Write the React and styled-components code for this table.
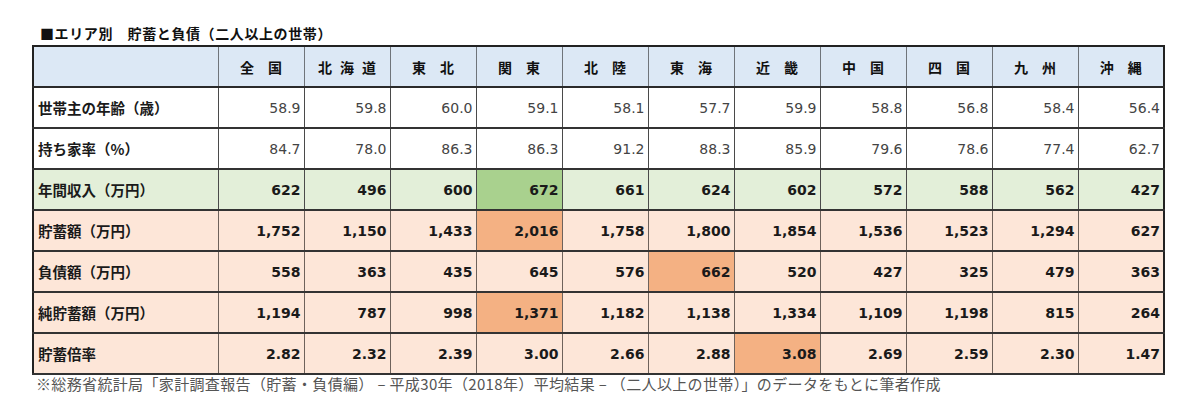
import React from "react";
import styled, { createGlobalStyle } from "styled-components";

const Global = createGlobalStyle`
  html, body { margin: 0; padding: 0; background: #fff; }
  body { font-family: "DejaVu Sans", "Noto Sans CJK JP", sans-serif; }
`;

const Page = styled.div`
  width: 1200px;
  height: 420px;
  padding: 23px 0 0 32px;
  box-sizing: border-box;
  overflow: hidden;
`;

const Title = styled.div`
  font-family: "Noto Sans CJK JP", sans-serif;
  font-weight: 700;
  font-size: 14px;
  line-height: 20px;
  height: 20px;
  padding-left: 8px;
  margin-bottom: 2px;
  color: #111;
  letter-spacing: 0.6px;
`;

const Table = styled.table`
  border-collapse: collapse;
  table-layout: fixed;
  width: 1131px;
  border: 2px solid #222;
`;

const HeadCell = styled.th`
  background: #dce8f5;
  height: 39px;
  padding: 0 0 0 ${(p) => p.$spacing || 0}px;
  font-family: "Noto Sans CJK JP", sans-serif;
  font-weight: 700;
  font-size: 14px;
  color: #111;
  text-align: center;
  white-space: pre;
  border-left: ${(p) => (p.$first ? "none" : "1.5px solid #6f747a")};
  border-bottom: 2px solid #2a2a2a;
  letter-spacing: ${(p) => p.$spacing || 0}px;
`;

const rowBg = {
  white: "#ffffff",
  green: "#e3efd9",
  pink: "#fde6d8",
};
const hiBg = {
  green: "#a9d18e",
  pink: "#f4b183",
};

const Row = styled.tr`
  background: ${(p) => rowBg[p.$tone]};
`;

const Label = styled.td`
  height: 39px;
  padding: 0 0 0 4px;
  font-family: "Noto Sans CJK JP", sans-serif;
  font-weight: 700;
  font-size: 14.5px;
  color: #1a1a1a;
  border-bottom: 2px solid #333;
  white-space: nowrap;
`;

const Cell = styled.td`
  height: 39px;
  padding: 0 3px 0 0;
  text-align: right;
  font-family: "DejaVu Sans", "Noto Sans CJK JP", sans-serif;
  font-size: 14px;
  font-weight: ${(p) => (p.$bold ? 700 : 400)};
  color: ${(p) => (p.$bold ? "#1a1a1a" : "#444")};
  background: ${(p) => (p.$hi ? hiBg[p.$tone] : "transparent")};
  border-left: 1.5px solid ${(p) => (p.$tone === "pink" ? "#6e625b" : "#4a4a4a")};
  border-bottom: 2px solid #333;
`;

const Footer = styled.div`
  font-family: "Noto Sans CJK JP", sans-serif;
  font-size: 15px;
  line-height: 20px;
  color: #555;
  padding-left: 4px;
  margin-top: -1px;
  letter-spacing: 0.35px;
  white-space: pre;
`;

const heads = [
  { t: "全　国" },
  { t: "北海道", s: 8 },
  { t: "東　北" },
  { t: "関　東" },
  { t: "北　陸" },
  { t: "東　海" },
  { t: "近　畿" },
  { t: "中　国" },
  { t: "四　国" },
  { t: "九　州" },
  { t: "沖　縄" },
];

const rows = [
  {
    label: "世帯主の年齢（歳）",
    tone: "white",
    values: ["58.9", "59.8", "60.0", "59.1", "58.1", "57.7", "59.9", "58.8", "56.8", "58.4", "56.4"],
  },
  {
    label: "持ち家率（%）",
    tone: "white",
    values: ["84.7", "78.0", "86.3", "86.3", "91.2", "88.3", "85.9", "79.6", "78.6", "77.4", "62.7"],
  },
  {
    label: "年間収入（万円）",
    tone: "green",
    hi: 3,
    values: ["622", "496", "600", "672", "661", "624", "602", "572", "588", "562", "427"],
  },
  {
    label: "貯蓄額（万円）",
    tone: "pink",
    hi: 3,
    values: ["1,752", "1,150", "1,433", "2,016", "1,758", "1,800", "1,854", "1,536", "1,523", "1,294", "627"],
  },
  {
    label: "負債額（万円）",
    tone: "pink",
    hi: 5,
    values: ["558", "363", "435", "645", "576", "662", "520", "427", "325", "479", "363"],
  },
  {
    label: "純貯蓄額（万円）",
    tone: "pink",
    hi: 3,
    values: ["1,194", "787", "998", "1,371", "1,182", "1,138", "1,334", "1,109", "1,198", "815", "264"],
  },
  {
    label: "貯蓄倍率",
    tone: "pink",
    hi: 6,
    values: ["2.82", "2.32", "2.39", "3.00", "2.66", "2.88", "3.08", "2.69", "2.59", "2.30", "1.47"],
  },
];

export default function App() {
  return (
    <Page>
      <Global />
      <Title>■エリア別　貯蓄と負債（二人以上の世帯）</Title>
      <Table>
        <colgroup>
          <col style={{ width: 185 }} />
          {heads.map((h) => (
            <col key={h.t} style={{ width: 86 }} />
          ))}
        </colgroup>
        <thead>
          <tr>
            <HeadCell $first />
            {heads.map((h) => (
              <HeadCell key={h.t} $spacing={h.s}>
                {h.t}
              </HeadCell>
            ))}
          </tr>
        </thead>
        <tbody>
          {rows.map((r) => (
            <Row key={r.label} $tone={r.tone}>
              <Label>{r.label}</Label>
              {r.values.map((v, i) => (
                <Cell key={i} $tone={r.tone} $bold={r.tone !== "white"} $hi={r.hi === i}>
                  {v}
                </Cell>
              ))}
            </Row>
          ))}
        </tbody>
      </Table>
      <Footer>※総務省統計局「家計調査報告（貯蓄・負債編） – 平成30年（2018年）平均結果 – （二人以上の世帯）」のデータをもとに筆者作成</Footer>
    </Page>
  );
}
